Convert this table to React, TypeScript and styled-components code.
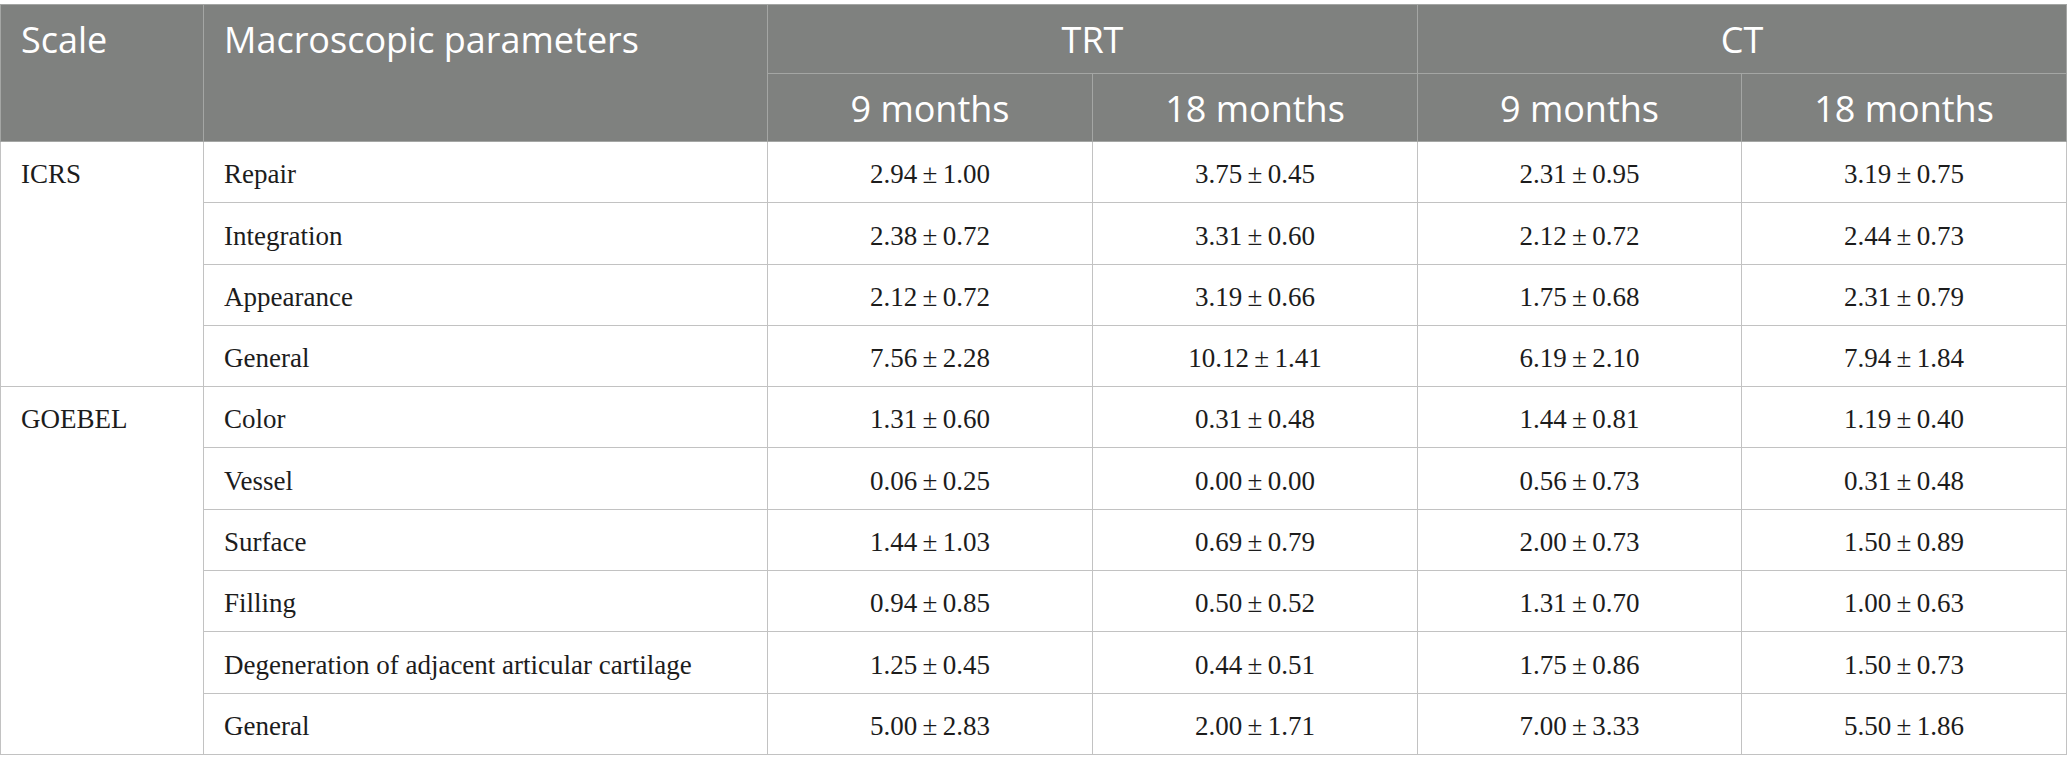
import React from 'react';
import styled, { createGlobalStyle } from 'styled-components';

const Global = createGlobalStyle`
  html, body { margin: 0; padding: 0; background: #ffffff; }
`;

const Page = styled.div`
  padding-top: 4px;
`;

const Table = styled.table`
  width: 2066px;
  border-collapse: collapse;
  table-layout: fixed;
`;

const HeadCell = styled.th<{ $align?: 'left' | 'center'; $span?: boolean }>`
  background: #7f817f;
  color: #ffffff;
  font-family: "Open Sans", "Noto Sans", sans-serif;
  font-size: 36px;
  font-weight: 400;
  line-height: 65.5px;
  padding: 2px 20px 0;
  border: 1px solid #a4a6a4;
  text-align: ${(p) => p.$align ?? 'center'};
  vertical-align: ${(p) => (p.$span ? 'top' : 'middle')};
  white-space: nowrap;
`;

const Cell = styled.td<{ $align?: 'left' | 'center'; $span?: boolean }>`
  color: #1c1c1c;
  font-family: "Liberation Serif", "Times New Roman", serif;
  font-size: 27px;
  line-height: 56px;
  padding: 4.3px 20px 0;
  border: 1px solid #c2c2c2;
  text-align: ${(p) => p.$align ?? 'center'};
  vertical-align: ${(p) => (p.$span ? 'top' : 'middle')};
  white-space: nowrap;
`;

type Row = { name: string; values: string[] };
type Group = { scale: string; rows: Row[] };

const groups: Group[] = [
  {
    scale: 'ICRS',
    rows: [
      { name: 'Repair', values: ['2.94 ± 1.00', '3.75 ± 0.45', '2.31 ± 0.95', '3.19 ± 0.75'] },
      { name: 'Integration', values: ['2.38 ± 0.72', '3.31 ± 0.60', '2.12 ± 0.72', '2.44 ± 0.73'] },
      { name: 'Appearance', values: ['2.12 ± 0.72', '3.19 ± 0.66', '1.75 ± 0.68', '2.31 ± 0.79'] },
      { name: 'General', values: ['7.56 ± 2.28', '10.12 ± 1.41', '6.19 ± 2.10', '7.94 ± 1.84'] },
    ],
  },
  {
    scale: 'GOEBEL',
    rows: [
      { name: 'Color', values: ['1.31 ± 0.60', '0.31 ± 0.48', '1.44 ± 0.81', '1.19 ± 0.40'] },
      { name: 'Vessel', values: ['0.06 ± 0.25', '0.00 ± 0.00', '0.56 ± 0.73', '0.31 ± 0.48'] },
      { name: 'Surface', values: ['1.44 ± 1.03', '0.69 ± 0.79', '2.00 ± 0.73', '1.50 ± 0.89'] },
      { name: 'Filling', values: ['0.94 ± 0.85', '0.50 ± 0.52', '1.31 ± 0.70', '1.00 ± 0.63'] },
      {
        name: 'Degeneration of adjacent articular cartilage',
        values: ['1.25 ± 0.45', '0.44 ± 0.51', '1.75 ± 0.86', '1.50 ± 0.73'],
      },
      { name: 'General', values: ['5.00 ± 2.83', '2.00 ± 1.71', '7.00 ± 3.33', '5.50 ± 1.86'] },
    ],
  },
];

const fmt = (v: string) => v.replace(' ± ', '\u2009±\u2009');

export default function App() {
  return (
    <Page>
      <Global />
      <Table>
        <colgroup>
          <col style={{ width: 203 }} />
          <col style={{ width: 564 }} />
          <col style={{ width: 325 }} />
          <col style={{ width: 325 }} />
          <col style={{ width: 324 }} />
          <col style={{ width: 325 }} />
        </colgroup>
        <thead>
          <tr>
            <HeadCell rowSpan={2} $align="left" $span>
              Scale
            </HeadCell>
            <HeadCell rowSpan={2} $align="left" $span>
              Macroscopic parameters
            </HeadCell>
            <HeadCell colSpan={2}>TRT</HeadCell>
            <HeadCell colSpan={2}>CT</HeadCell>
          </tr>
          <tr>
            <HeadCell>9 months</HeadCell>
            <HeadCell>18 months</HeadCell>
            <HeadCell>9 months</HeadCell>
            <HeadCell>18 months</HeadCell>
          </tr>
        </thead>
        <tbody>
          {groups.map((g) =>
            g.rows.map((r, i) => (
              <tr key={g.scale + r.name}>
                {i === 0 && (
                  <Cell rowSpan={g.rows.length} $align="left" $span>
                    {g.scale}
                  </Cell>
                )}
                <Cell $align="left">{r.name}</Cell>
                {r.values.map((v, j) => (
                  <Cell key={j}>{fmt(v)}</Cell>
                ))}
              </tr>
            ))
          )}
        </tbody>
      </Table>
    </Page>
  );
}
